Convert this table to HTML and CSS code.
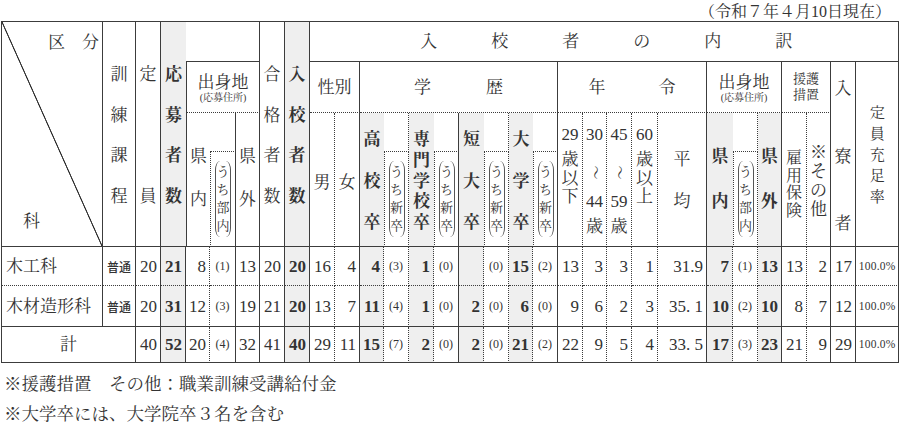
FILE: index.html
```html
<!DOCTYPE html>
<html lang="ja">
<head>
<meta charset="utf-8">
<title>入校者の内訳</title>
<link rel="stylesheet" href="styles.css">
</head>
<body>
<div class="date">（令和７年４月10日現在）</div>
<table class="tbl">
<colgroup>
<col class="w101"><col class="w33"><col class="w25"><col class="w25"><col class="w24"><col class="w26"><col class="w24"><col class="w25"><col class="w25">
<col class="w25"><col class="w25"><col class="w24"><col class="w25"><col class="w25"><col class="w25"><col class="w25"><col class="w25"><col class="w24"><col class="w25">
<col class="w25"><col class="w24"><col class="w25"><col class="w26"><col class="w49">
<col class="w26"><col class="w25"><col class="w24"><col class="w25"><col class="w24"><col class="w25"><col class="w43">
</colgroup>
<tr class="h1">
<th rowspan="4" class="corner top"><div class="cornerbox"><div class="kubun">区　分</div><div class="ka-l">科</div></div></th>
<th rowspan="4" class="top"><div class="vs v-a"><span>訓</span><span>練</span><span>課</span><span>程</span></div></th>
<th rowspan="4" class="top"><div class="vs v-a"><span>定</span><span>員</span></div></th>
<th rowspan="4" class="top s rn b"><div class="vs v-a"><span>応</span><span>募</span><span>者</span><span>数</span></div></th>
<td colspan="3"></td>
<th rowspan="4" class="top"><div class="vs v-a"><span>合</span><span>格</span><span>者</span><span>数</span></div></th>
<th rowspan="4" class="top s b"><div class="vs v-a"><span>入</span><span>校</span><span>者</span><span>数</span></div></th>
<th colspan="22"><div class="spread sp-in"><span>入</span><span>校</span><span>者</span><span>の</span><span>内</span><span>訳</span></div></th>
</tr>
<tr class="h2">
<th colspan="3" class="ls bd"><div class="shu">出身地</div><div class="shu-s">(応募住所)</div></th>
<th colspan="2" class="bd hz">性別</th>
<th colspan="8" class="bd"><div class="spread sp-gaku"><span>学</span><span>歴</span></div></th>
<th colspan="5" class="bd"><div class="spread sp-nen"><span>年</span><span>令</span></div></th>
<th colspan="3" class="bd"><div class="shu">出身地</div><div class="shu-s">(応募住所)</div></th>
<th colspan="2" class="bd"><div class="engo">援護</div><div class="engo">措置</div></th>
<th rowspan="3" class="top"><div class="vs v-ryo"><span>入</span><span>寮</span><span>者</span></div></th>
<th rowspan="3" class="top"><div class="vs v-ju"><span>定</span><span>員</span><span>充</span><span>足</span><span>率</span></div></th>
</tr>
<tr class="h3a">
<th rowspan="2" class="top ls rn"><div class="vs v-ken"><span>県</span><span>内</span></div></th>
<td class="bd"></td>
<th rowspan="2" class="top"><div class="vs v-ken"><span>県</span><span>外</span></div></th>
<th rowspan="2" class="top d"><div class="vs v-one"><span>男</span></div></th>
<th rowspan="2" class="top"><div class="vs v-one"><span>女</span></div></th>
<th rowspan="2" class="top s rn b"><div class="vs v-gk"><span>高</span><span>校</span><span>卒</span></div></th>
<td class="bd d"></td>
<th rowspan="2" class="top s rn b"><div class="vs v-gk"><span>専</span><span>門</span><span>学</span><span>校</span><span>卒</span></div></th>
<td class="bd"></td>
<th rowspan="2" class="top s rn b"><div class="vs v-gk"><span>短</span><span>大</span><span>卒</span></div></th>
<td class="bd d"></td>
<th rowspan="2" class="top s rn b"><div class="vs v-gk"><span>大</span><span>学</span><span>卒</span></div></th>
<td class="bd"></td>
<th rowspan="2" class="top d"><div class="age"><span class="num">29</span><span class="k1">歳</span><span class="k">以</span><span class="k">下</span></div></th>
<th rowspan="2" class="top d"><div class="age2"><span class="num">30</span><span class="wave">〜</span><span class="num n2">44</span><span class="n3">歳</span></div></th>
<th rowspan="2" class="top d"><div class="age2"><span class="num">45</span><span class="wave">〜</span><span class="num n2">59</span><span class="n3">歳</span></div></th>
<th rowspan="2" class="top d"><div class="age"><span class="num">60</span><span class="k1">歳</span><span class="k">以</span><span class="k">上</span></div></th>
<th rowspan="2" class="top"><div class="vs v-hei"><span>平</span><span>均</span></div></th>
<th rowspan="2" class="top s rn b"><div class="vs v-ken2"><span>県</span><span>内</span></div></th>
<td class="bd d"></td>
<th rowspan="2" class="top s b"><div class="vs v-ken2"><span>県</span><span>外</span></div></th>
<th rowspan="2" class="top d"><div class="vs v-koyo"><span>雇</span><span>用</span><span>保</span><span>険</span></div></th>
<th rowspan="2" class="top"><div class="vs v-sono"><span>※</span><span>そ</span><span>の</span><span>他</span></div></th>
</tr>
<tr class="h3b">
<td class="ld top"><div class="uchi"><span>う</span><span>ち</span><span>部</span><span>内</span></div></td>
<td class="ld d top"><div class="uchi"><span>う</span><span>ち</span><span>新</span><span>卒</span></div></td>
<td class="ld top"><div class="uchi"><span>う</span><span>ち</span><span>新</span><span>卒</span></div></td>
<td class="ld d top"><div class="uchi"><span>う</span><span>ち</span><span>新</span><span>卒</span></div></td>
<td class="ld top"><div class="uchi"><span>う</span><span>ち</span><span>新</span><span>卒</span></div></td>
<td class="ld d top"><div class="uchi"><span>う</span><span>ち</span><span>部</span><span>内</span></div></td>
</tr>
<tr class="d1">
<td class="ka">木工科</td>
<td class="kc">普通</td>
<td class="n">20</td>
<td class="n s b">21</td>
<td class="n d">8</td>
<td class="p">(1)</td>
<td class="n">13</td>
<td class="n">20</td>
<td class="n s b">20</td>
<td class="n d">16</td>
<td class="n">4</td>
<td class="n s b d">4</td>
<td class="p d">(3)</td>
<td class="n s b d">1</td>
<td class="p">(0)</td>
<td class="n s b d"></td>
<td class="p d">(0)</td>
<td class="n s b d">15</td>
<td class="p">(2)</td>
<td class="n d">13</td>
<td class="n d">3</td>
<td class="n d">3</td>
<td class="n d">1</td>
<td class="n">31.9</td>
<td class="n s b d">7</td>
<td class="p d">(1)</td>
<td class="n s b">13</td>
<td class="n d">13</td>
<td class="n">2</td>
<td class="n">17</td>
<td class="r">100.0%</td>
</tr>
<tr class="d2">
<td class="ka">木材造形科</td>
<td class="kc">普通</td>
<td class="n">20</td>
<td class="n s b">31</td>
<td class="n d">12</td>
<td class="p">(3)</td>
<td class="n">19</td>
<td class="n">21</td>
<td class="n s b">20</td>
<td class="n d">13</td>
<td class="n">7</td>
<td class="n s b d">11</td>
<td class="p d">(4)</td>
<td class="n s b d">1</td>
<td class="p">(0)</td>
<td class="n s b d">2</td>
<td class="p d">(0)</td>
<td class="n s b d">6</td>
<td class="p">(0)</td>
<td class="n d">9</td>
<td class="n d">6</td>
<td class="n d">2</td>
<td class="n d">3</td>
<td class="n">35. 1</td>
<td class="n s b d">10</td>
<td class="p d">(2)</td>
<td class="n s b">10</td>
<td class="n d">8</td>
<td class="n">7</td>
<td class="n">12</td>
<td class="r">100.0%</td>
</tr>
<tr class="d3">
<td colspan="2" class="kei">計</td>
<td class="n">40</td>
<td class="n s b">52</td>
<td class="n d">20</td>
<td class="p">(4)</td>
<td class="n">32</td>
<td class="n">41</td>
<td class="n s b">40</td>
<td class="n d">29</td>
<td class="n">11</td>
<td class="n s b d">15</td>
<td class="p d">(7)</td>
<td class="n s b d">2</td>
<td class="p">(0)</td>
<td class="n s b d">2</td>
<td class="p d">(0)</td>
<td class="n s b d">21</td>
<td class="p">(2)</td>
<td class="n d">22</td>
<td class="n d">9</td>
<td class="n d">5</td>
<td class="n d">4</td>
<td class="n">33. 5</td>
<td class="n s b d">17</td>
<td class="p d">(3)</td>
<td class="n s b">23</td>
<td class="n d">21</td>
<td class="n">9</td>
<td class="n">29</td>
<td class="r">100.0%</td>
</tr>
</table>
<div class="notes">
<p>※援護措置　その他：職業訓練受講給付金</p>
<p>※大学卒には、大学院卒３名を含む</p>
</div>
</body>
</html>
```

FILE: styles.css
```css
* { box-sizing: border-box; }
body {
  margin: 0;
  padding: 0;
  background: #fff;
  color: #333;
  font-family: "Liberation Serif", "Noto Serif CJK JP", "Noto Sans CJK JP", serif;
}
.date {
  height: 21px;
  padding: 3px 9px 0 0;
  font-size: 16px;
  line-height: 18px;
  text-align: right;
}
.tbl {
  margin-left: 1px;
  width: 898px;
  table-layout: fixed;
  border-collapse: separate;
  border-spacing: 0;
  border-top: 1px solid #3c3c3c;
  border-left: 1px solid #3c3c3c;
}
.w101 { width: 101px; }
.w33 { width: 33px; }
.w26 { width: 26px; }
.w25 { width: 25px; }
.w24 { width: 24px; }
.w49 { width: 49px; }
.w43 { width: 43px; }

.tbl th, .tbl td {
  padding: 0;
  border-right: 1px solid #3c3c3c;
  border-bottom: 1px solid #3c3c3c;
  font-weight: normal;
  text-align: center;
  vertical-align: middle;
  white-space: nowrap;
  font-size: 17px;
  line-height: 17px;
}
.h1 { height: 40px; }
.h2 { height: 51px; }
.h3a { height: 39px; }
.h3b { height: 95px; }
.d1 { height: 39px; }
.d2 { height: 41px; }
.d3 { height: 36px; }
.d1 td { border-bottom-style: dotted; }

.tbl .top { vertical-align: top; }
.tbl .d { border-right-style: dotted; }
.tbl .bd { border-bottom-style: dotted; }
.tbl .rn { border-right: none; }
.tbl .ls { border-left: 1px solid #3c3c3c; }
.tbl .ld { border-left: 1px dotted #3c3c3c; }
.tbl .s { background: #efefef; }
.tbl .b { font-weight: bold; }

/* corner */
.corner {
  background: linear-gradient(to top right, transparent calc(50% - 0.9px), #333 calc(50% - 0.3px), #333 calc(50% + 0.3px), transparent calc(50% + 0.9px));
}
.cornerbox {
  height: 222px;
  display: flex;
  flex-direction: column;
  justify-content: space-between;
  padding: 12px 0 14px;
}
.kubun { text-align: right; padding-right: 3px; }
.ka-l { text-align: left; padding-left: 21px; }

/* vertical stacks */
.vs {
  display: flex;
  flex-direction: column;
  align-items: center;
  justify-content: space-between;
}
.vs > span { display: block; height: 17px; line-height: 17px; }
.v-a { margin-top: 44px; height: 139px; }
.v-ryo { margin-top: 18px; height: 152px; }
.v-ju { margin-top: 44px; height: 99px; font-size: 15px; }
.v-ju > span { height: 15px; line-height: 15px; }
.v-ken { margin-top: 35px; height: 60px; }
.v-one { margin-top: 61px; }
.v-gk { margin-top: 18px; height: 100px; }
.v-hei { margin-top: 38px; height: 59px; }
.v-ken2 { margin-top: 35px; height: 62px; }
.v-koyo { margin-top: 36px; height: 70px; font-size: 16px; justify-content: flex-start; }
.v-koyo > span { height: 17.5px; line-height: 17.5px; }
.v-sono { margin-top: 30px; height: 76px; justify-content: flex-start; }
.v-sono > span { height: 19px; line-height: 19px; }

.age, .age2 { margin-top: 13px; display: flex; flex-direction: column; align-items: center; }
.age > span, .age2 > span { display: block; height: 17px; line-height: 17px; }
.age .k1 { margin-top: 8px; height: 18.5px; line-height: 18.5px; }
.age .k { height: 18.5px; line-height: 18.5px; }
.age2 .wave { margin-top: 21px; font-size: 14px; transform: rotate(90deg); }
.age2 .n2 { margin-top: 12px; }
.age2 .n3 { margin-top: 8px; }
.num { letter-spacing: 0; }

.uchi {
  margin: 9px auto 0;
  width: 16px;
  padding: 2px 0;
  border-left: 1px solid #555;
  border-right: 1px solid #555;
  border-radius: 5px / 9px;
}
.uchi span { display: block; font-size: 13px; height: 18px; line-height: 18px; }

/* horizontal header texts */
.spread { display: flex; justify-content: center; }
.sp-in { gap: 54px; padding-left: 4px; }
.sp-gaku { gap: 55px; }
.sp-nen { gap: 53px; }
.shu { font-size: 17px; line-height: 17px; padding-top: 3px; }
.shu-s { font-size: 10px; line-height: 13px; }
.engo { font-size: 13px; line-height: 16px; }

/* data */
.tbl .n { text-align: right; padding-right: 3px; }
.tbl .p { font-size: 12px; }
.tbl .ka { text-align: left; padding-left: 4px; }
.tbl .kc { font-size: 12px; font-family: "Noto Sans CJK JP", sans-serif; font-weight: 500; }
.tbl .r { font-size: 11.5px; letter-spacing: 0.2px; }

.notes { margin-top: 6px; padding-left: 4px; }
.notes p { margin: 0; font-size: 17.5px; line-height: 30px; }
```
